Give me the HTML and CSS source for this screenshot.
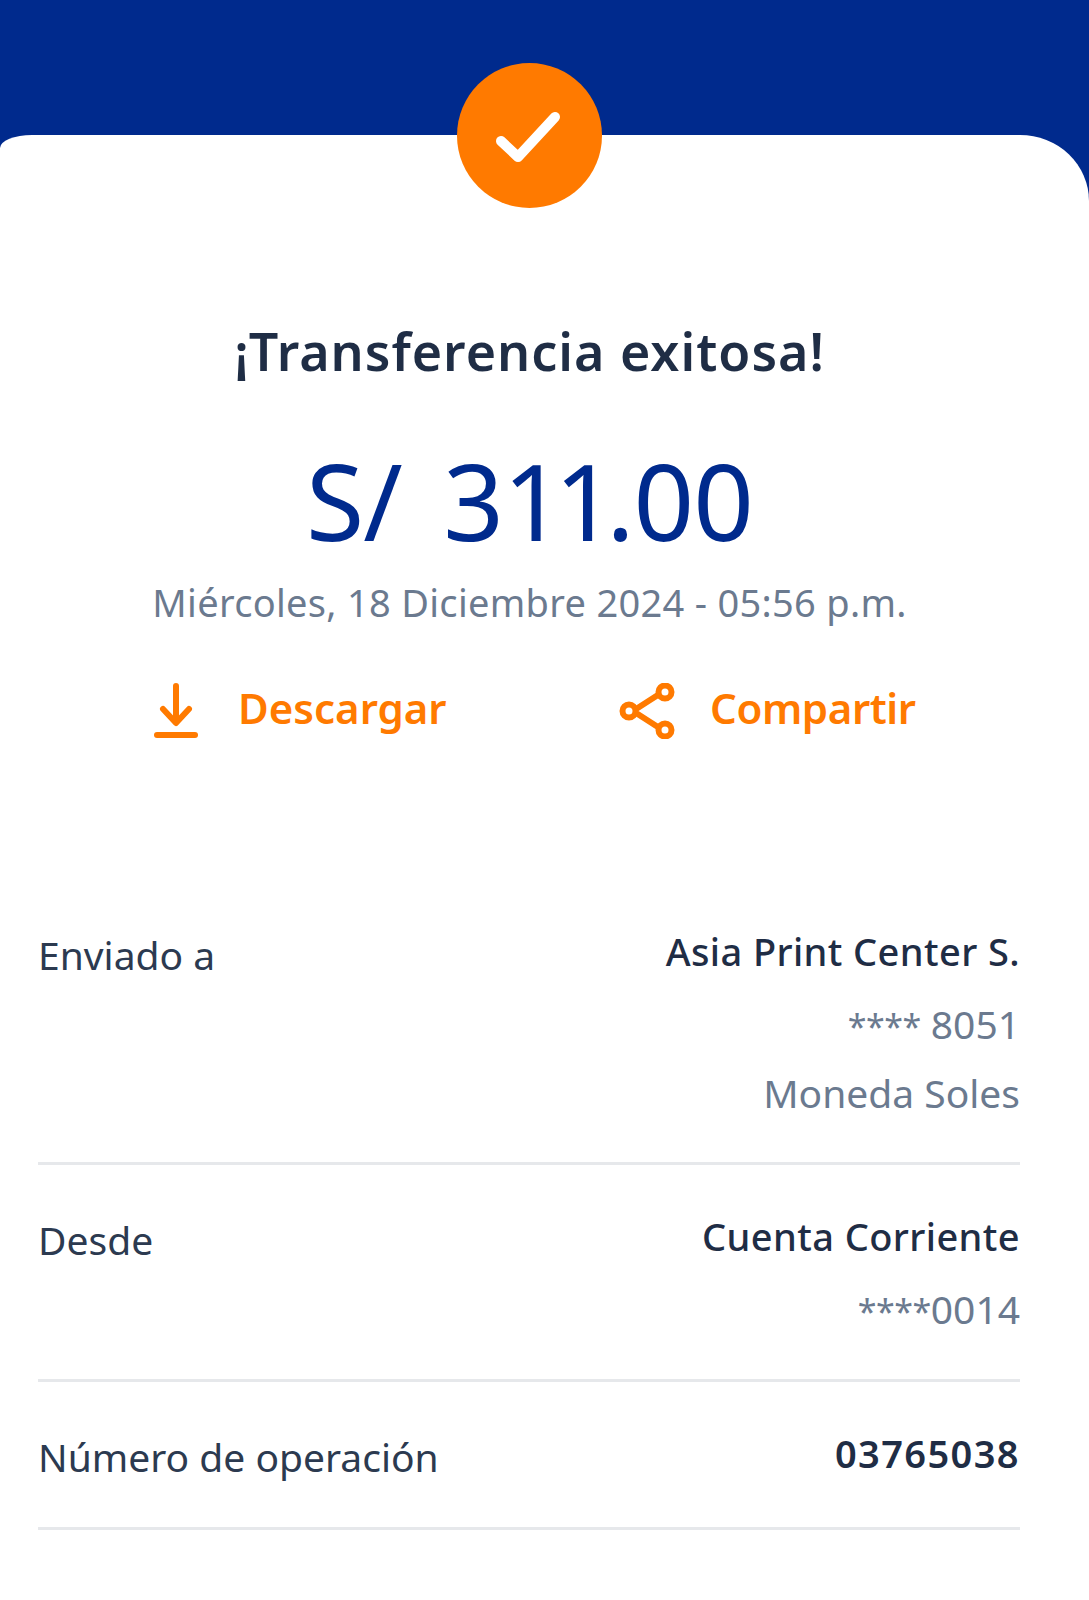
FILE: index.html
```html
<!DOCTYPE html>
<html lang="es">
<head>
<meta charset="utf-8">
<title>Transferencia exitosa</title>
<link rel="stylesheet" href="styles.css">
</head>
<body>
<div class="page">
  <header class="top"></header>
  <main class="card">
    <div class="badge">
      <svg viewBox="0 0 64 52" width="64" height="52"><path d="M5 30 L22 46 L59 6" fill="none" stroke="#fff" stroke-width="10" stroke-linecap="round" stroke-linejoin="round"/></svg>
    </div>
    <h1 class="title">¡Transferencia exitosa!</h1>
    <div class="amount">S/ 3<span class="ones">11</span>.00</div>
    <div class="date">Miércoles, 18 Diciembre 2024 - 05:56 p.m.</div>
    <div class="actions">
      <a class="action act-down">
        <svg viewBox="0 0 44 56" width="44" height="56"><path d="M22 3 V38 M9 26 L22 40 L35 26" fill="none" stroke="#ff7a00" stroke-width="6" stroke-linecap="round" stroke-linejoin="round"/><path d="M3 52 H41" stroke="#ff7a00" stroke-width="6" stroke-linecap="round"/></svg>
        <span>Descargar</span>
      </a>
      <a class="action act-share">
        <svg viewBox="0 0 56 56" width="56" height="56"><path d="M14 28 L42 10 M14 28 L42 46" stroke="#ff7a00" stroke-width="6" fill="none"/><circle cx="10" cy="28" r="6.5" fill="#fff" stroke="#ff7a00" stroke-width="6"/><circle cx="46" cy="9" r="6.5" fill="#fff" stroke="#ff7a00" stroke-width="6"/><circle cx="46" cy="47" r="6.5" fill="#fff" stroke="#ff7a00" stroke-width="6"/></svg>
        <span>Compartir</span>
      </a>
    </div>
    <section class="rows">
      <div class="row row-a">
        <div class="label">Enviado a</div>
        <div class="vals">
          <div class="strong">Asia Print Center S.</div>
          <div class="muted"><span class="stars">****</span> 8051</div>
          <div class="muted">Moneda Soles</div>
        </div>
      </div>
      <div class="row row-b">
        <div class="label">Desde</div>
        <div class="vals">
          <div class="strong">Cuenta Corriente</div>
          <div class="muted"><span class="stars">****</span>0014</div>
        </div>
      </div>
      <div class="row row-c">
        <div class="label">Número de operación</div>
        <div class="vals">
          <div class="strong digits">03765038</div>
        </div>
      </div>
    </section>
  </main>
</div>
</body>
</html>
```

FILE: styles.css
```css
html, body { margin: 0; padding: 0; background: #fff; }
body { font-family: "Noto Sans", "Liberation Sans", sans-serif; }
.page { width: 1089px; height: 1600px; overflow: hidden; background: #002a8d; }
.top { height: 135px; }
.card {
  position: relative;
  height: 1465px;
  background: #fff;
  border-top-left-radius: 32px 13px;
  border-top-right-radius: 69px 66px;
  box-sizing: border-box;
  padding: 182px 30px 0 0;
  display: flex;
  flex-direction: column;
  align-items: center;
}
.badge {
  position: absolute;
  top: -72px;
  left: 457px;
  width: 145px;
  height: 145px;
  border-radius: 50%;
  background: #ff7a00;
  display: flex;
  align-items: center;
  justify-content: center;
}
.badge svg { margin-left: -4px; margin-top: 2px; }
.title { margin: 0; font-size: 52px; line-height: 68px; font-weight: 600; color: #1f2d45; letter-spacing: 1px; }
.amount { margin-top: 50px; font-size: 106px; line-height: 130px; font-weight: 400; color: #002a8d; letter-spacing: -1px; word-spacing: 15px; }
.ones { letter-spacing: -9px; }
.date { margin-top: 11px; font-size: 38px; line-height: 52px; letter-spacing: 0.3px; color: #6b7a8f; }
.actions { align-self: stretch; display: flex; padding-left: 154px; margin-top: 47px; height: 64px; }
.action { display: flex; align-items: center; font-size: 42px; font-weight: 600; color: #ff7a00; }
.action svg { margin-top: 8px; }
.act-down { width: 465px; }
.act-down span { margin-left: 40px; }
.act-share span { margin-left: 35px; letter-spacing: -0.4px; }
.rows { align-self: stretch; margin: 186px 39px 0 38px; }
.row { display: flex; justify-content: space-between; box-sizing: border-box; border-bottom: 3px solid #e6e8eb; }
.row-a { height: 240px; }
.row-b { height: 217px; padding-top: 45px; }
.row-c { height: 148px; padding-top: 45px; }
.label { font-size: 39px; line-height: 52px; color: #2c3a50; margin-top: 4px; }
.vals { text-align: right; }
.strong { font-size: 38px; line-height: 52px; font-weight: 500; letter-spacing: 0.4px; color: #1f2d45; }
.digits { font-weight: 600; letter-spacing: 1.4px; }
.muted { font-size: 39px; line-height: 52px; color: #6b7a8f; margin-top: 21px; }
.muted + .muted { margin-top: 15px; }
.stars { font-size: 34px; letter-spacing: -0.5px; }
```
